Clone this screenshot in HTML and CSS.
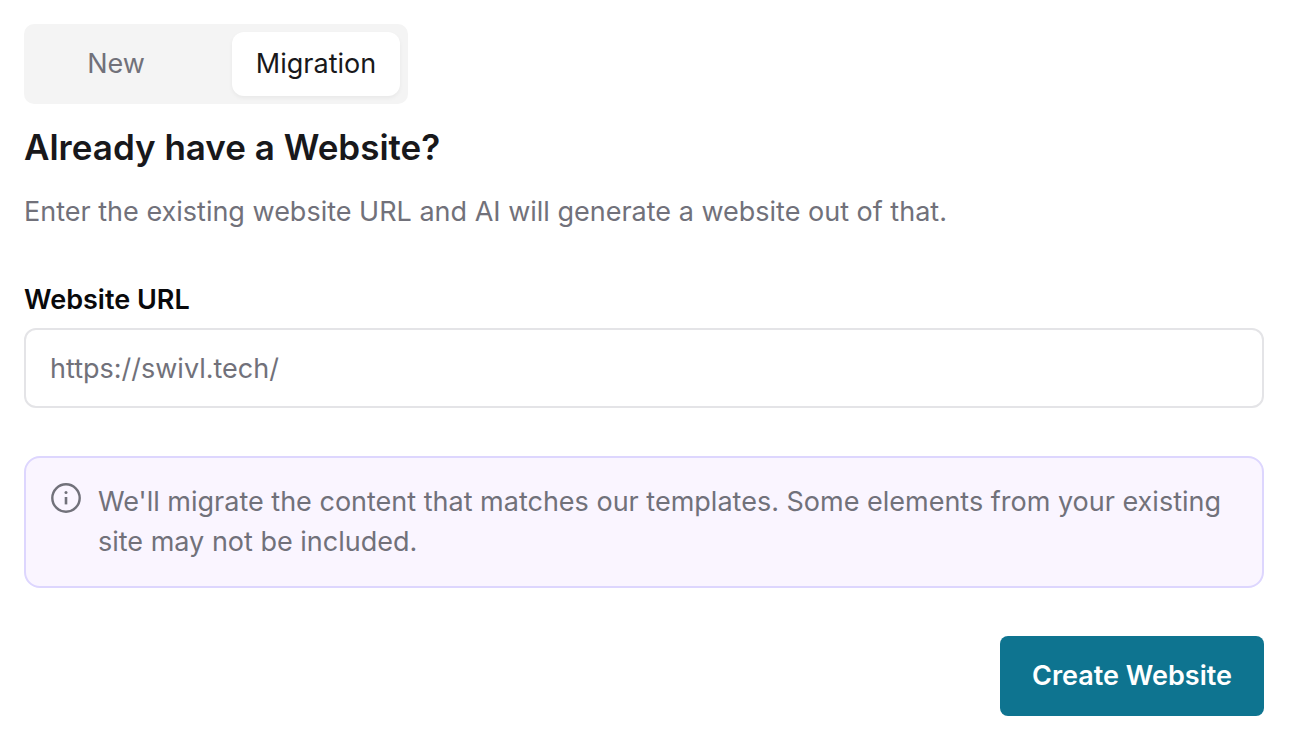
FILE: index.html
```html
<!DOCTYPE html>
<html lang="en">
<head>
<meta charset="utf-8">
<title>Create Website</title>
<link rel="stylesheet" href="styles.css">
</head>
<body>
<main class="panel">
  <div class="tabs" role="tablist">
    <button class="tab" type="button" role="tab" aria-selected="false">New</button>
    <button class="tab tab-active" type="button" role="tab" aria-selected="true">Migration</button>
  </div>
  <h1 class="title">Already have a Website?</h1>
  <p class="subtitle">Enter the existing website URL and AI will generate a website out of that.</p>
  <form class="form">
    <label class="label" for="url">Website URL</label>
    <input class="input" id="url" type="url" placeholder="https://swivl.tech/">
    <div class="notice">
      <svg class="notice-icon" viewBox="0 0 32 32" fill="none" stroke="currentColor" aria-hidden="true"><circle cx="16" cy="16" r="13.7" stroke-width="2.4"/><path d="M16 15v7.4" stroke-width="2.6"/><circle cx="16" cy="10.5" r="1.5" fill="currentColor" stroke="none"/></svg>
      <p class="notice-text">We'll migrate the content that matches our templates. Some elements from your existing site may not be included.</p>
    </div>
    <button class="submit" type="submit">Create Website</button>
  </form>
</main>
</body>
</html>
```
FILE: styles.css
```css
* { box-sizing: border-box; margin: 0; }
body {
  background: #fff;
  color: #18181b;
  font-family: Inter, "Liberation Sans", sans-serif;
  font-size: 27px;
  line-height: 40px;
}
button, input { font: inherit; }
.panel { padding: 24px 30px 30px 24px; }
.tabs {
  display: inline-grid;
  grid-template-columns: 168px 168px;
  gap: 32px;
  padding: 8px;
  background: #f4f4f4;
  border-radius: 10px;
}
.tab {
  height: 64px;
  padding: 0;
  border: 0;
  border-radius: 12px;
  background: transparent;
  color: #71717a;
}
.tab-active {
  background: #fff;
  color: #18181b;
  box-shadow: 0 2px 4px rgba(0, 0, 0, 0.05);
}
.title { margin-top: 20px; font-size: 35px; font-weight: 600; line-height: 46px; }
.subtitle { margin-top: 22px; color: #71717a; }
.form { display: flex; flex-direction: column; margin-top: 48px; }
.label { font-weight: 600; color: #09090b; }
.input {
  width: 100%;
  height: 80px;
  margin-top: 8px;
  padding: 0 24px;
  border: 2px solid #e4e4e7;
  border-radius: 12px;
  background: #fff;
  color: #18181b;
}
.input::placeholder { color: #71717a; opacity: 1; }
.notice {
  display: flex;
  gap: 16px;
  margin-top: 48px;
  padding: 24px;
  border: 2px solid #ddd6fe;
  border-radius: 16px;
  background: #faf5ff;
  color: #71717a;
}
.notice-icon { flex: none; width: 32px; height: 32px; }
.submit {
  align-self: flex-end;
  height: 80px;
  margin-top: 48px;
  padding: 0 32px;
  border: 0;
  border-radius: 8px;
  background: #0e7490;
  color: #fff;
  font-weight: 600;
}
```
